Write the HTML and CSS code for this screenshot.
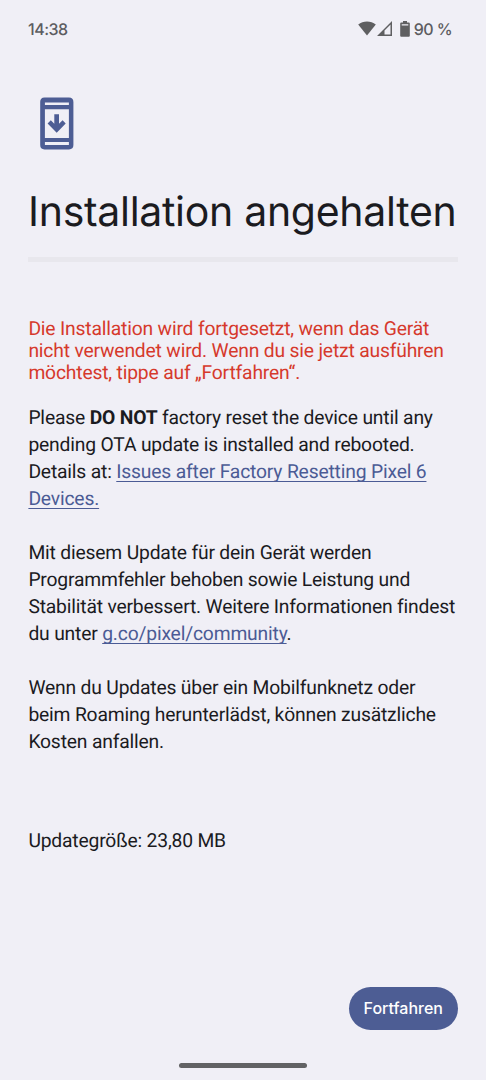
FILE: index.html
```html
<!DOCTYPE html>
<html lang="de">
<head>
<meta charset="utf-8">
<title>Systemupdate</title>
<link rel="stylesheet" href="styles.css">
</head>
<body>
<div class="screen">
  <header class="status-bar">
    <span class="clock">14:38</span>
    <div class="status-icons">
      <svg class="wifi" width="18" height="15" viewBox="0 0 18 15"><path d="M0.2 3.4C5 -.6 13 -.6 17.8 3.4L9 14.4Z"/></svg>
      <svg class="signal" width="15" height="15" viewBox="0 0 15 15"><path fill-rule="evenodd" d="M15 0V15H0ZM13.5 3.6L7.5 9.6V13.5H13.5Z"/></svg>
      <svg class="battery" width="10" height="16" viewBox="0 0 10 16"><path fill-rule="evenodd" d="M3 0H7V1.6H8.8Q9.8 1.6 9.8 2.6V14.8Q9.8 15.8 8.8 15.8H1.2Q.2 15.8 .2 14.8V2.6Q.2 1.6 1.2 1.6H3ZM1.7 3.2V4.4H8.3V3.2Z"/></svg>
      <span class="percent">90 %</span>
    </div>
  </header>
  <main class="content">
    <svg class="update-icon" width="34" height="53" viewBox="0 0 34 53">
      <path fill-rule="evenodd" d="M4.5 .5H29Q33.4 .5 33.4 5V48Q33.4 52.4 29 52.4H4.5Q.2 52.4 .2 48V5Q.2 .5 4.5 .5ZM4.9 5.4V8H28.9V5.4ZM4.9 12.2V41H28.9V12.2ZM4.9 45V48H28.9V45Z"/>
      <path d="M14.3 17.2H19V26.7L22.6 23.2L25.7 26.4L16.7 35.8L7.6 26.4L10.8 23.2L14.3 26.7Z"/>
    </svg>
    <h1 class="title">Installation angehalten</h1>
    <div class="progress"></div>
    <p class="notice">Die Installation wird fortgesetzt, wenn das Gerät<br>nicht verwendet wird. Wenn du sie jetzt ausführen<br>möchtest, tippe auf „Fortfahren“.</p>
    <div class="details">
      <p>Please <b>DO NOT</b> factory reset the device until any<br>pending OTA update is installed and rebooted.<br>Details at: <a href="#">Issues after Factory Resetting Pixel 6<br>Devices.</a></p>
      <p>Mit diesem Update für dein Gerät werden<br>Programmfehler behoben sowie Leistung und<br>Stabilität verbessert. Weitere Informationen findest<br>du unter <a href="#">g.co/pixel/community</a>.</p>
      <p>Wenn du Updates über ein Mobilfunknetz oder<br>beim Roaming herunterlädst, können zusätzliche<br>Kosten anfallen.</p>
    </div>
    <p class="size">Updategröße: 23,80 MB</p>
  </main>
  <footer class="actions">
    <button class="continue">Fortfahren</button>
  </footer>
  <div class="nav-bar"><div class="nav-handle"></div></div>
</div>
</body>
</html>
```
FILE: styles.css
```css
* { box-sizing: border-box; }
body { margin: 0; background: #f0eff6; }
p, h1 { margin: 0; }
.screen {
  width: 486px;
  height: 1080px;
  display: flex;
  flex-direction: column;
  background: #f0eff6;
  color: #1b1b1f;
  font-family: Roboto, "Liberation Sans", sans-serif;
  font-size: 19.3px;
  letter-spacing: -0.18px;
  text-rendering: geometricPrecision;
  white-space: nowrap;
  overflow: hidden;
}
.status-bar {
  height: 58px;
  padding: 0 34px 0 28px;
  display: flex;
  align-items: center;
  justify-content: space-between;
  color: #5c5c60;
  font: 450 16px/20px Inter, sans-serif;
}
.clock { letter-spacing: -0.5px; }
.status-icons { display: flex; align-items: center; fill: #5f5f61; }
.battery { margin: 0 4px 0 8px; }
.signal { margin-left: 1px; }
.wifi, .signal, .battery { margin-bottom: 1px; }
.percent { letter-spacing: -0.6px; }
.content { flex: 1; padding: 39px 28px 0; display: flex; flex-direction: column; }
.update-icon { margin-left: 12px; fill: #4d5d94; }
.title {
  margin-top: 36px;
  height: 50px;
  font: 385 41px/50px Inter, sans-serif;
  letter-spacing: -0.3px;
}
.progress { margin-top: 21px; height: 5px; background: #e8e7ed; }
.notice, .details, .size { padding-left: 0.4px; }
.notice { margin-top: 56px; line-height: 22px; color: #d6392c; }
.details { margin-top: 20px; display: flex; flex-direction: column; gap: 27px; line-height: 27px; }
.details a { color: #4b5b95; text-decoration-thickness: 1px; text-underline-offset: 3px; text-decoration-skip-ink: none; }
.size { margin-top: 72px; line-height: 27px; }
.actions { display: flex; justify-content: flex-end; padding: 0 28px; }
.continue {
  width: 109.5px;
  height: 43px;
  padding: 0;
  border: 0;
  border-radius: 22px;
  background: #4d5d94;
  color: #fff;
  font: 500 16px/43px Inter, sans-serif;
}
.nav-bar { height: 50px; padding-top: 33px; display: flex; justify-content: center; }
.nav-handle { width: 128px; height: 5px; border-radius: 3px; background: #626264; }
```
